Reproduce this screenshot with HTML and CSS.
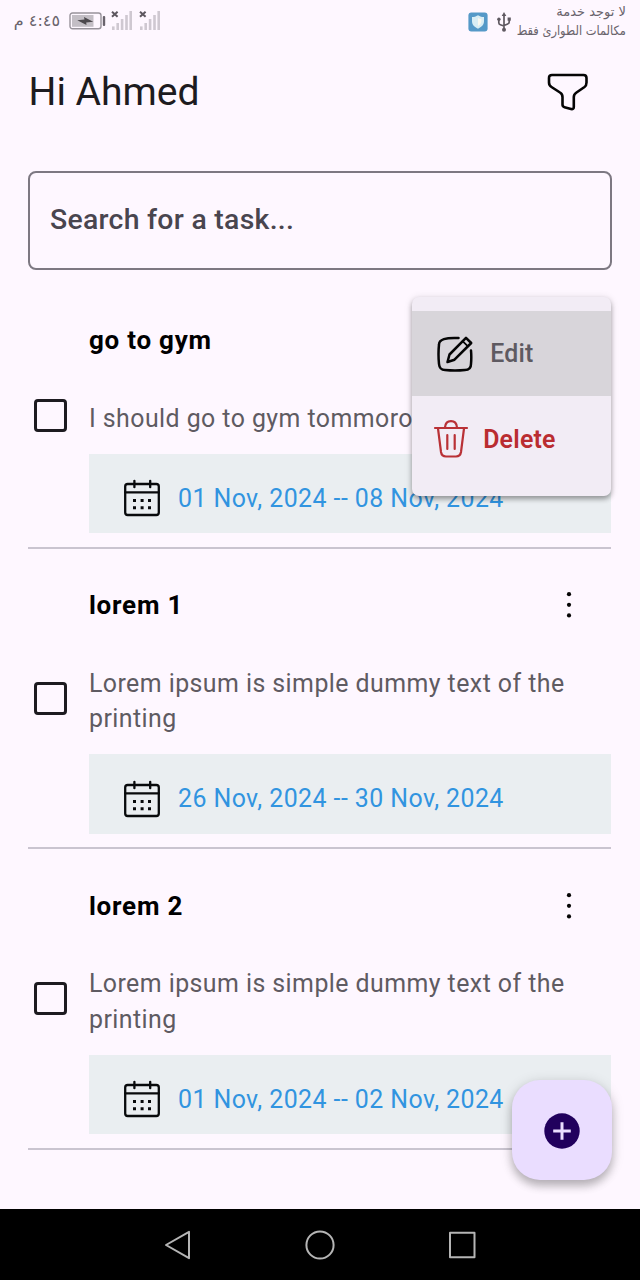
FILE: index.html
```html
<!DOCTYPE html>
<html lang="en">
<head>
<meta charset="utf-8">
<title>Tasks</title>
<link rel="stylesheet" href="styles.css">
</head>
<body>
<svg class="symbols" aria-hidden="true">
  <symbol id="calendar" viewBox="0 0 38 38">
    <g fill="none" stroke="#080a0c" stroke-width="2.3" stroke-linecap="round">
      <rect x="2.2" y="5" width="33.6" height="31" rx="2.5"/>
      <path d="M2.2 13.3H35.8M11.4 1.8V8.2M27.2 1.8V8.2"/>
    </g>
    <path fill="#080a0c" d="M10 20h3v3h-3zM17.6 20h3v3h-3zM25 20h3v3h-3zM10 27.2h3v3h-3zM17.6 27.2h3v3h-3zM25 27.2h3v3h-3z"/>
  </symbol>
  <symbol id="more" viewBox="0 0 6 28"><g fill="#050505"><circle cx="3" cy="3.2" r="2.1"/><circle cx="3" cy="13.8" r="2.1"/><circle cx="3" cy="24.4" r="2.1"/></g></symbol>
  <symbol id="signal" viewBox="0 0 22 20">
    <g fill="#cfc8d1"><rect x="1" y="15.4" width="2.6" height="3.6"/><rect x="5.4" y="12" width="2.6" height="7"/><rect x="9.8" y="8" width="2.6" height="11"/><rect x="14.2" y="4" width="2.6" height="15"/><rect x="18.4" y="0" width="2.6" height="19"/></g>
    <path d="M1 .8l5.6 5M6.6 .8l-5.6 5" stroke="#5d575f" stroke-width="2"/>
  </symbol>
</svg>
<div class="screen">
  <header class="status">
    <span class="clock" dir="rtl">٤:٤٥ م</span>
    <svg class="battery" viewBox="0 0 38 18"><rect x="1" y="1" width="31" height="15.8" rx="2.5" fill="none" stroke="#98939b" stroke-width="1.4"/><rect x="3" y="3" width="21.5" height="11.8" fill="#c3bec5"/><path d="M8.300 8.200L15.500 7.400L15 5L24.200 9.800L17.200 10.400L17.500 13Z" fill="#4c484d"/><rect x="33.8" y="4" width="2.4" height="10" rx="1" fill="#69636c"/></svg>
    <svg class="signal"><use href="#signal"/></svg>
    <svg class="signal second"><use href="#signal"/></svg>
    <span class="spring"></span>
    <svg class="shield" viewBox="0 0 20 20"><rect x=".4" y=".4" width="19.2" height="19.2" rx="3" fill="#5599c8"/><path d="M10 3.2c2 1.3 4 1.8 6 1.9v4.2c0 3.6-2.5 5.7-6 7.5-3.500-1.800-6-3.900-6-7.500V5.100c2-.1 4-.6 6-1.900z" fill="#d9edf4"/><path d="M10 6v8c2-1.100 3.400-2.600 3.400-4.900V7.300C12.200 7.200 11 6.700 10 6z" fill="#fbf8ef"/></svg>
    <svg class="usb" viewBox="0 0 14 20"><g fill="none" stroke="#5f5961" stroke-width="1.700"><path d="M7 3v14M1.800 7.500v3.200q0 1.500 1.500 2L7 14M12.200 7v3q0 1.500-1.500 2L7 13.500"/></g><g fill="#5f5961"><path d="M7 0l2.300 4H4.700z"/><circle cx="7" cy="17.800" r="2"/><circle cx="1.900" cy="7.200" r="1.700"/><rect x="10.600" y="5.500" width="3.200" height="3.200"/></g></svg>
    <div class="carrier" dir="rtl" lang="ar"><span class="none">لا توجد خدمة</span><span class="sos">مكالمات الطوارئ فقط</span></div>
  </header>
  <div class="appbar">
    <h1 class="greeting">Hi Ahmed</h1>
    <svg class="filter" viewBox="0 0 42 38" fill="none" stroke="#050505" stroke-width="2.600" stroke-linejoin="round"><path d="M5 2H36.500Q39.500 2 39.500 5V9.500Q39.500 12.500 37.500 14L29.500 19.500Q26.800 21.300 26.800 24V34Q26.800 36.600 24 36L17.500 34.200Q15.500 33.600 15.500 31.500V24Q15.500 21 13 19.500L4.500 14Q2 12.500 2 9.500V5Q2 2 5 2Z"/></svg>
  </div>
  <div class="search">Search for a task...</div>
  <main class="tasks">
    <article class="task">
      <span class="checkbox"></span>
      <div class="content">
        <div class="head"><h2 class="title">go to gym</h2></div>
        <p class="desc">I should go to gym tommorow</p>
        <div class="date"><svg class="cal"><use href="#calendar"/></svg>01 Nov, 2024 -- 08 Nov, 2024</div>
      </div>
      <div class="menu">
        <div class="item edit"><svg class="edit-icon" viewBox="0 0 36 36" fill="none" stroke="#050505" stroke-width="2.500" stroke-linecap="round" stroke-linejoin="round"><path d="M21.500 2Q2 1 2 8.500Q1 18 2 28Q2.500 34 8 34Q18 35 28 34Q34 34 34 28Q34.600 21 34 14.500"/><path d="M10.500 26L12.500 18.500L29 1.800L34.200 7L17.500 23.700Z"/><path d="M25.600 5.200L30.700 10.200" stroke-width="1.800"/></svg>Edit</div>
        <div class="item delete"><svg class="trash" viewBox="0 0 36 40" fill="none" stroke="#b93136" stroke-width="2.200" stroke-linecap="round" stroke-linejoin="round"><path d="M2 9H34M12 8.500Q12.500 2.200 18 2.200T24 8.500M5 9.500L8 33Q8.700 37.500 13 37.500H23Q27.300 37.500 28 33L31 9.500M14.300 16V30M21.700 16V30"/></svg>Delete</div>
      </div>
    </article>
    <article class="task">
      <span class="checkbox"></span>
      <div class="content">
        <div class="head"><h2 class="title">lorem 1</h2><svg class="more"><use href="#more"/></svg></div>
        <p class="desc">Lorem ipsum is simple dummy text of the printing</p>
        <div class="date"><svg class="cal"><use href="#calendar"/></svg>26 Nov, 2024 -- 30 Nov, 2024</div>
      </div>
    </article>
    <article class="task">
      <span class="checkbox"></span>
      <div class="content">
        <div class="head"><h2 class="title">lorem 2</h2><svg class="more"><use href="#more"/></svg></div>
        <p class="desc">Lorem ipsum is simple dummy text of the printing</p>
        <div class="date"><svg class="cal"><use href="#calendar"/></svg>01 Nov, 2024 -- 02 Nov, 2024</div>
      </div>
    </article>
  </main>
  <div class="fab"><svg class="plus" viewBox="0 0 36 36"><circle cx="18" cy="18" r="17.700" fill="#21005d"/><path d="M18 9.200V26.800M9.200 18H26.800" stroke="#eaddff" stroke-width="3"/></svg></div>
  <footer class="nav">
    <svg class="navicons" viewBox="0 0 320 32" fill="none" stroke="#b5b5b5" stroke-width="2" stroke-linejoin="round"><path d="M29 2.800V29.200L6 16Z"/><circle cx="160" cy="16" r="13.600"/><rect x="290" y="3.800" width="24.500" height="24.500"/></svg>
  </footer>
</div>
</body>
</html>
```
FILE: styles.css
```css
* { box-sizing: border-box; }
body { margin: 0; background: #fef7ff; font-family: Roboto, "Liberation Sans", sans-serif; }
.symbols { display: none; }
.screen { position: relative; width: 640px; height: 1280px; overflow: hidden; display: flex; flex-direction: column; }

.status { height: 42px; flex: none; display: flex; align-items: center; padding: 0 14px; color: #69636b; font-family: "DejaVu Sans", sans-serif; }
.clock { width: 46px; font-size: 16px; line-height: 20px; white-space: nowrap; }
.battery { width: 38px; height: 18px; margin-left: 9px; }
.signal { width: 22px; height: 20px; margin-left: 4px; }
.second { margin-left: 6px; }
.spring { flex: 1; }
.shield { width: 20px; height: 20px; margin-top: 2px; }
.usb { width: 14px; height: 20px; margin: 2px 6px 0 9px; }
.carrier { width: 109px; display: flex; flex-direction: column; font-size: 13px; line-height: 19px; white-space: nowrap; }
.none { margin-top: -1px; }
.sos { transform: scaleX(.88); transform-origin: right center; }

.appbar { height: 100px; flex: none; display: flex; align-items: center; justify-content: space-between; padding: 0 51px 0 28.500px; }
.greeting { margin: 0; font-size: 39.1px; font-weight: 400; line-height: 50px; color: #1d1b20; }
.filter { width: 42px; height: 38px; }

.search { height: 99px; flex: none; margin: 28.500px 28.400px 0; border: 2px solid #7d7882; border-radius: 8px; padding: 0 20px 2px 19.600px; display: flex; align-items: center; font-size: 28.4px; font-weight: 500; letter-spacing: .28px; color: #49454f; }

.tasks { margin: 14.200px 28.800px 0 28.400px; flex: 1; }
.task { position: relative; display: flex; align-items: center; padding: 14px 0 13.600px; border-bottom: 2px solid #cac4d0; }
.checkbox { width: 33px; height: 33px; margin: 0 22.200px 0 5.400px; border: 3.500px solid #1d1b20; border-radius: 4px; flex: none; }
.content { flex: 1; min-width: 0; }
.head { height: 85px; display: flex; align-items: center; justify-content: space-between; padding-right: 39.600px; }
.title { margin: 0; font-size: 26px; font-weight: 700; letter-spacing: .760px; color: #000; }
.more { width: 6px; height: 28px; }
.desc { margin: 17.900px 0 17.700px; font-size: 24.900px; line-height: 35.500px; letter-spacing: .445px; color: #5f5b62; }
.date { height: 79.300px; padding-left: 34px; display: flex; align-items: center; gap: 17px; background: #eaeef1; color: #3194e0; font-size: 24.900px; letter-spacing: .440px; padding-top: 9.600px; white-space: nowrap; }
.cal { width: 38px; height: 38px; flex: none; }

/* Popup opened from the first task's overflow button */
.menu { position: absolute; z-index: 2; right: 0; top: 13px; width: 199px; height: 199px; padding-top: 14px; background: #f2ecf5; border-radius: 7px; box-shadow: 0 3px 5px rgba(0,0,0,.32), 0 1px 8px rgba(0,0,0,.12); font-size: 24.900px; font-weight: 500; }
.item { height: 85.500px; display: flex; align-items: center; padding: 1px 0 0 25px; }
.edit { background: #d8d5da; color: #5e5a61; gap: 17px; letter-spacing: .2px; }
.edit-icon { width: 36px; height: 36px; }
.delete { padding-left: 21px; gap: 14px; color: #ba2c31; font-weight: 600; letter-spacing: .2px; }
.trash { width: 36px; height: 40px; }

.fab { position: absolute; left: 512px; top: 1080px; width: 99.500px; height: 100px; padding-top: 1px; border-radius: 28px; background: #eaddff; display: flex; align-items: center; justify-content: center; box-shadow: 0 6px 8px rgba(0,0,0,.22), 0 2px 14px rgba(0,0,0,.14); }
.plus { width: 36px; height: 36px; }
.nav { height: 71px; flex: none; background: #000; display: flex; align-items: center; justify-content: center; }
.navicons { width: 320px; height: 32px; }
```
